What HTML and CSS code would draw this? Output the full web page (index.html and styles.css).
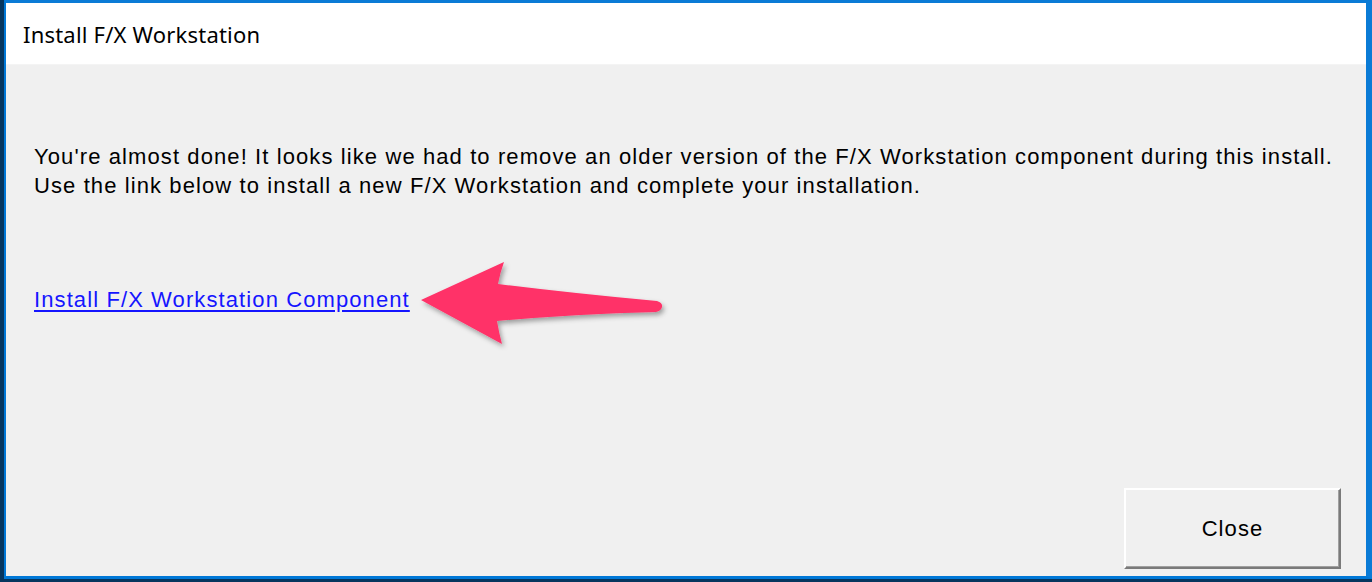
FILE: index.html
```html
<!DOCTYPE html>
<html>
<head>
<meta charset="utf-8">
<title>Install F/X Workstation</title>
<link rel="stylesheet" href="styles.css">
</head>
<body>
<div class="window">
  <div class="titlebar">Install F/X Workstation</div>
  <div class="content">
    <p class="message">You're almost done! It looks like we had to remove an older version of the F/X Workstation component during this install.<br>Use the link below to install a new F/X Workstation and complete your installation.</p>
    <div class="link-row">
      <a class="install-link" href="#">Install F/X Workstation Component</a>
    </div>
    <div class="actions">
      <button class="btn" type="button">Close</button>
    </div>
    <svg class="arrow" width="260" height="100" viewBox="415 255 260 100" xmlns="http://www.w3.org/2000/svg">
      <defs>
        <filter id="sh" x="-20%" y="-30%" width="140%" height="160%">
          <feDropShadow dx="2" dy="3" stdDeviation="2.5" flood-color="#000" flood-opacity="0.35"/>
        </filter>
      </defs>
      <path filter="url(#sh)" fill="#ff3168" d="M421 299 L504 261 Q500 272 498 283 Q580 293 657 300 Q663 302 662 306 Q661 310 656 311 Q575 313 497 320 Q499 332 502 343 Z"/>
    </svg>
  </div>
</div>
</body>
</html>
```
FILE: styles.css
```css
html, body {
  margin: 0;
  padding: 0;
}
body {
  width: 1372px;
  height: 582px;
  background: #06365f;
  overflow: hidden;
}
.window {
  margin-left: 4px;
  width: 1360px;
  height: 573px;
  border-left: 2px solid #0078d7;
  border-top: 3px solid #0a7bd6;
  border-bottom: 3px solid #0078d7;
  border-right: 6px solid #0a7bd6;
  display: flex;
  flex-direction: column;
}
.titlebar {
  height: 61px;
  background: #ffffff;
  padding-left: 17px;
  font-family: "Noto Sans", "Open Sans", sans-serif;
  font-size: 22px;
  letter-spacing: 0.2px;
  line-height: 62px;
  color: #000;
  border-bottom: 1px solid #f4f4f4;
}
.content {
  position: relative;
  flex: 1;
  background: #f0f0f0;
  display: flex;
  flex-direction: column;
  padding: 77px 25px 7px 28px;
  font-family: "Liberation Sans", Arial, sans-serif;
  font-size: 22px;
  letter-spacing: 1.1px;
  color: #000;
}
.message {
  margin: 0;
  line-height: 29px;
  white-space: nowrap;
}
.link-row {
  margin-top: 85px;
  line-height: 29px;
}
.install-link {
  color: #1515ff;
  text-decoration: underline;
  text-underline-offset: 3px;
}
.actions {
  margin-top: auto;
  display: flex;
  justify-content: flex-end;
}
.btn {
  width: 217px;
  height: 81px;
  background: #f0f0f0;
  border-top: 2px solid #ffffff;
  border-left: 2px solid #ffffff;
  border-right: 2px solid #7a7a7a;
  border-bottom: 2px solid #7a7a7a;
  box-shadow: inset -1px -1px 0 #a0a0a0;
  font-family: "Liberation Sans", Arial, sans-serif;
  font-size: 22px;
  letter-spacing: 1.1px;
  color: #000;
  padding: 0;
}
.arrow {
  position: absolute;
  left: 409px;
  top: 191px;
}
```
